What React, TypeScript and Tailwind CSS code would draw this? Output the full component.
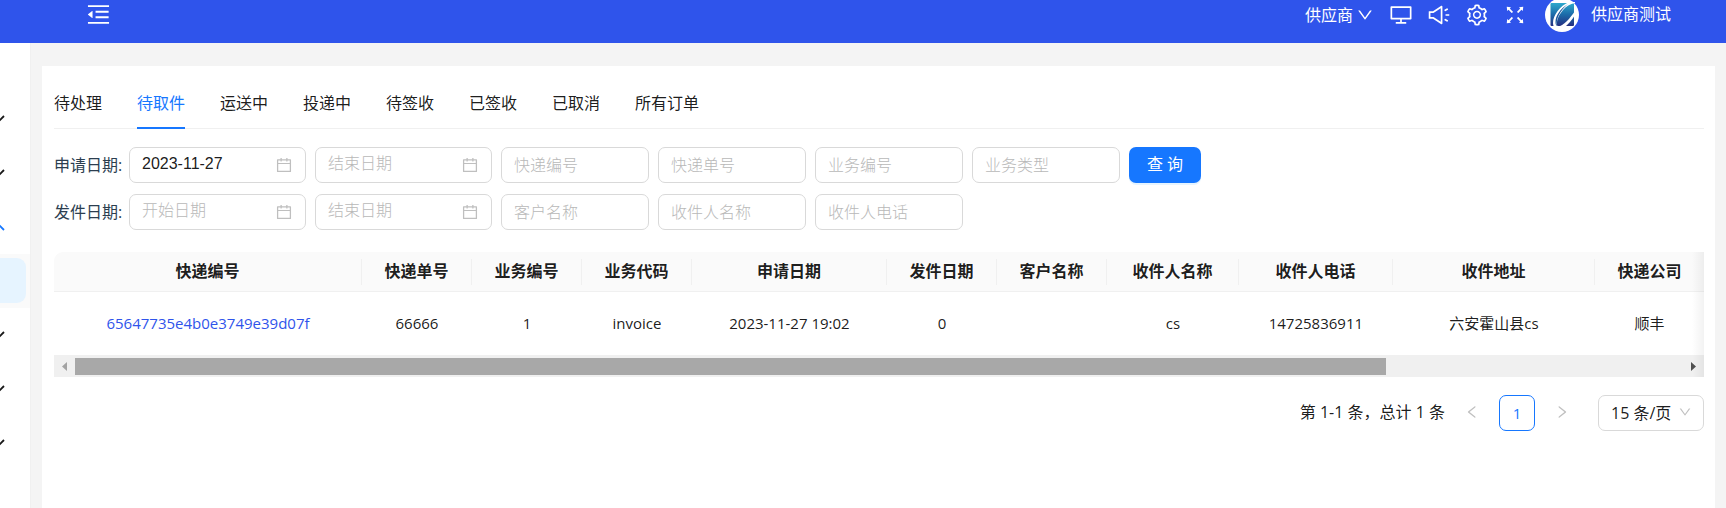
import type { ReactNode } from "react";
import {
  AiOutlineCalendar,
  AiOutlineDesktop,
  AiOutlineDown,
  AiOutlineFullscreen,
  AiOutlineLeft,
  AiOutlineMenuFold,
  AiOutlineRight,
  AiOutlineSetting,
  AiOutlineSound,
} from "react-icons/ai";

const tabs = ["待处理", "待取件", "运送中", "投递中", "待签收", "已签收", "已取消", "所有订单"];

const columns = [
  { title: "快递编号", value: "65647735e4b0e3749e39d07f", width: 308 },
  { title: "快递单号", value: "66666", width: 110 },
  { title: "业务编号", value: "1", width: 110 },
  { title: "业务代码", value: "invoice", width: 110 },
  { title: "申请日期", value: "2023-11-27 19:02", width: 195 },
  { title: "发件日期", value: "0", width: 110 },
  { title: "客户名称", value: "", width: 110 },
  { title: "收件人名称", value: "cs", width: 132 },
  { title: "收件人电话", value: "14725836911", width: 154 },
  { title: "收件地址", value: "六安霍山县cs", width: 202 },
  { title: "快递公司", value: "顺丰", width: 109 },
];
const totalWidth = columns.reduce((sum, c) => sum + c.width, 0);

function Logo() {
  return (
    <svg viewBox="0 0 34 34" className="size-[34px] shrink-0" aria-hidden="true">
      <defs>
        <linearGradient id="logo" x1="0" y1="0" x2="0" y2="1">
          <stop offset="0" stopColor="#2fa9cc" />
          <stop offset="0.5" stopColor="#1b6ba9" />
          <stop offset="1" stopColor="#252f80" />
        </linearGradient>
      </defs>
      <circle cx="17" cy="17" r="17" fill="#fff" />
      <rect x="5.5" y="5" width="23.5" height="23" rx="1" fill="url(#logo)" />
      <path d="M30 4 H24 C15 8 8 17 8 25 C8 29 10 31 14 30 C10 27 12 19 18 12 C21 8.500 25 6 30 5 Z" fill="#fff" />
      <path d="M23 6 C15 11 10.500 18 10.500 24 C10.500 26 11 27.500 12 28 C10.500 22 15 12 23 6 Z" fill="#1f5a9c" />
      <path d="M12 29 C19 28 25 20 30 13 L30 17 C27 22 23 27 18 30 Z" fill="#fff" />
    </svg>
  );
}

function MenuArrow({ open = false }: { open?: boolean }) {
  return (
    <div className="flex h-[54px] items-center">
      <svg
        viewBox="0 0 12 8"
        className={open ? "-ml-[7px] h-2 w-3 shrink-0 text-[#1677ff]" : "-ml-[7px] h-2 w-3 shrink-0 text-black/90"}
        fill="none"
        stroke="currentColor"
        strokeWidth="1.8"
        aria-hidden="true"
      >
        <path d={open ? "M1 7 L6 2 L11 7" : "M1 1 L6 6 L11 1"} />
      </svg>
    </div>
  );
}

const fieldText = "text-base text-black/90 placeholder:text-[#b8b8b8] placeholder:font-light outline-none";

function DateField({ label, placeholder, value }: { label: string; placeholder: string; value?: string }) {
  return (
    <div className="flex h-9 w-[177px] items-center rounded-[7px] border border-[#d9d9d9] px-3">
      <input
        aria-label={label}
        placeholder={placeholder}
        defaultValue={value}
        className={"min-w-0 flex-1 pb-[3px] font-['Liberation_Sans','Noto_Sans_CJK_SC',sans-serif] " + fieldText}
      />
      <AiOutlineCalendar className="size-[18px] shrink-0 text-[#bfbfbf]" />
    </div>
  );
}

function TextField({ name }: { name: string }) {
  return (
    <input
      aria-label={name}
      placeholder={name}
      className={"h-9 w-[148px] rounded-[7px] border border-[#d9d9d9] px-3 " + fieldText}
    />
  );
}

function Row({ label, children }: { label: string; children: ReactNode }) {
  return (
    <div role="group" aria-label={label} className="flex items-center">
      <span className="w-[75px] shrink-0 whitespace-nowrap text-[#2c3e50]">{label}:</span>
      <div className="flex gap-[9px]">{children}</div>
    </div>
  );
}

export default function App() {
  return (
    <div className="flex h-screen flex-col overflow-hidden bg-[#f4f4f4] font-['Open_Sans','Noto_Sans_CJK_SC',sans-serif] text-base text-black/90">
      <header className="h-[43px] shrink-0 bg-[#2f54eb] pr-[55px] pl-[85px] text-white">
        <div className="flex h-[29px] items-center justify-between">
          <button type="button" aria-label="收起菜单">
            <AiOutlineMenuFold className="size-[27px]" />
          </button>
          <div className="flex items-center">
            <button type="button" className="mr-[15px] flex items-center gap-[3px]">
              供应商
              <AiOutlineDown className="size-[18px]" />
            </button>
            <div className="mr-[18px] flex items-center gap-[14px]">
              <button type="button" aria-label="桌面"><AiOutlineDesktop className="size-6" /></button>
              <button type="button" aria-label="消息"><AiOutlineSound className="size-6" /></button>
              <button type="button" aria-label="设置"><AiOutlineSetting className="size-6" /></button>
              <button type="button" aria-label="全屏"><AiOutlineFullscreen className="size-6" /></button>
            </div>
            <a href="#user" className="flex items-center gap-3">
              <Logo />
              <span className="pb-0.5">供应商测试</span>
            </a>
          </div>
        </div>
      </header>

      <div className="flex min-h-0 flex-1">
        <aside className="w-[31px] shrink-0 overflow-hidden border-r border-[#f0f0f0] bg-white pt-[49px]">
          <MenuArrow />
          <MenuArrow />
          <MenuArrow open />
          <div className="h-[54px] bg-[#fafafa] pt-1 pr-1 pb-[5px]">
            <div className="h-full rounded-r-[9px] bg-[#e6f4ff]" />
          </div>
          <MenuArrow />
          <MenuArrow />
          <MenuArrow />
        </aside>

        <main className="mt-[23px] mr-[11px] ml-[11px] min-w-0 flex-1 bg-white pt-[18px] pr-[11px] pl-3">
          <nav className="flex gap-[35px] border-b border-[#f0f0f0]">
            {tabs.map((tab) => (
              <button
                key={tab}
                type="button"
                className={
                  tab === "待取件"
                    ? "-mb-px h-[45px] border-b-2 border-[#1677ff] pb-1.5 text-[#1677ff]"
                    : "-mb-px h-[45px] border-b-2 border-transparent pb-1.5"
                }
              >
                {tab}
              </button>
            ))}
          </nav>

          <form className="mt-[18px] flex flex-col gap-[11px]" onSubmit={(e) => e.preventDefault()}>
            <Row label="申请日期">
              <DateField label="申请开始日期" placeholder="开始日期" value="2023-11-27" />
              <DateField label="申请结束日期" placeholder="结束日期" />
              <TextField name="快递编号" />
              <TextField name="快递单号" />
              <TextField name="业务编号" />
              <TextField name="业务类型" />
              <button type="submit" className="h-9 w-[72px] rounded-[7px] bg-[#1677ff] pb-0.5 text-white shadow-[0_2px_0_rgba(5,145,255,0.1)]">
                查 询
              </button>
            </Row>
            <Row label="发件日期">
              <DateField label="发件开始日期" placeholder="开始日期" />
              <DateField label="发件结束日期" placeholder="结束日期" />
              <TextField name="客户名称" />
              <TextField name="收件人名称" />
              <TextField name="收件人电话" />
            </Row>
          </form>

          <div className="relative mt-[22px] overflow-hidden rounded-tl-[9px]">
            <table className="w-full table-fixed border-separate border-spacing-0 text-center">
              <colgroup>
                {columns.map((c) => (
                  <col key={c.title} style={{ width: `${(c.width / totalWidth) * 100}%` }} />
                ))}
              </colgroup>
              <thead>
                <tr className="h-10 bg-[#fafafa]">
                  {columns.map((c, i) => (
                    <th key={c.title} className="border-b border-[#f0f0f0] p-0 font-bold">
                      <div className={i < columns.length - 1 ? "h-[26px] border-r border-[#f0f0f0] leading-6" : "h-[26px] leading-6"}>
                        {c.title}
                      </div>
                    </th>
                  ))}
                </tr>
              </thead>
              <tbody>
                <tr className="h-[63px] text-[15px]">
                  {columns.map((c, i) => (
                    <td key={c.title} className="p-0">
                      {i === 0 ? <a href="#detail" className="text-[#2f54eb]">{c.value}</a> : c.value}
                    </td>
                  ))}
                </tr>
              </tbody>
            </table>
            <div className="flex h-[22px] items-center bg-[#f0f0f0]">
              <svg viewBox="0 0 21 22" className="h-[22px] w-[21px] shrink-0 fill-[#a3a3a3]" aria-hidden="true">
                <path d="M13 7 V16 L8 11.5 Z" />
              </svg>
              <div className="h-[17px] flex-1">
                <div className="h-full w-[81.5%] bg-[#a8a8a8]" />
              </div>
              <svg viewBox="0 0 21 22" className="h-[22px] w-[21px] shrink-0 fill-[#505050]" aria-hidden="true">
                <path d="M8 7 V16 L13 11.5 Z" />
              </svg>
            </div>
            <div className="pointer-events-none absolute inset-y-0 right-0 w-3 bg-linear-to-l from-black/5 to-transparent" />
          </div>

          <div className="mt-[18px] flex items-center justify-end gap-[9px]">
            <span className="pb-0.5">第 1-1 条，总计 1 条</span>
            <button type="button" aria-label="上一页" className="flex size-9 items-center justify-center pb-0.5 text-black/25">
              <AiOutlineLeft className="size-4" />
            </button>
            <button type="button" className="size-9 rounded-[7px] border border-[#1677ff] text-[15px] text-[#1677ff]">1</button>
            <button type="button" aria-label="下一页" className="flex size-9 items-center justify-center pb-0.5 text-black/25">
              <AiOutlineRight className="size-4" />
            </button>
            <div className="relative ml-[9px]">
              <select aria-label="每页条数" className="h-9 w-[106px] appearance-none rounded-[7px] border border-[#d9d9d9] bg-white pl-3">
                <option>15 条/页</option>
              </select>
              <AiOutlineDown className="pointer-events-none absolute top-2.5 right-3 size-[14px] text-black/25" />
            </div>
          </div>
        </main>
      </div>
    </div>
  );
}
